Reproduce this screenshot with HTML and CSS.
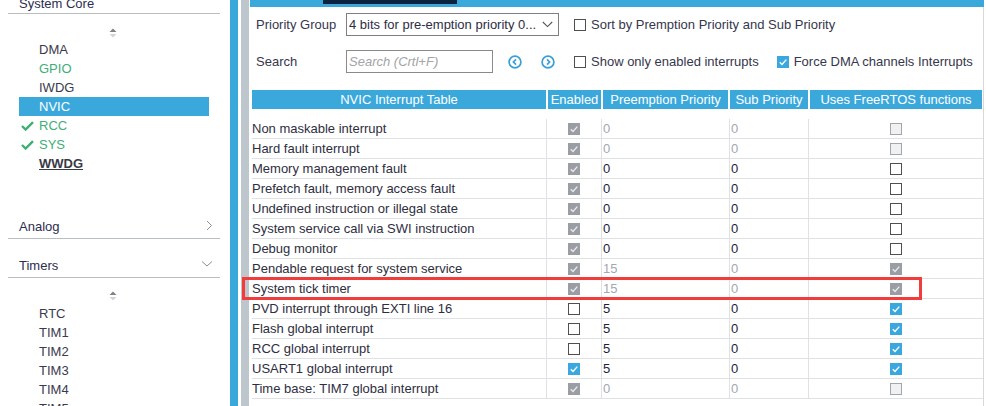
FILE: index.html
```html
<!DOCTYPE html>
<html>
<head>
<meta charset="utf-8">
<link rel="stylesheet" href="styles.css">
</head>
<body>
<div class="app">
  <aside class="sidebar">
    <div class="sec-head sec-first">
      <span>System Core</span>
      <svg class="chev" width="10" height="8" viewBox="0 0 10 8"><path d="M1.5 6 L5 2.5 L8.5 6" fill="none" stroke="#8a8f96" stroke-width="1"/></svg>
    </div>
    <div class="scroller"><svg width="8" height="10" viewBox="0 0 8 10"><path d="M0.5 4 L4 0.5 L7.5 4 Z" fill="#7d8288"/><path d="M0.5 6 L4 9.5 L7.5 6 Z" fill="#d2d5d8"/></svg></div>
    <ul class="items">
      <li>DMA</li>
      <li class="green">GPIO</li>
      <li>IWDG</li>
      <li class="sel">NVIC</li>
      <li class="green"><svg class="tick" width="13" height="10" viewBox="0 0 13 10"><path d="M1 5 L4.6 8.5 L12 1.2" fill="none" stroke="#3fae72" stroke-width="2.4"/></svg>RCC</li>
      <li class="green"><svg class="tick" width="13" height="10" viewBox="0 0 13 10"><path d="M1 5 L4.6 8.5 L12 1.2" fill="none" stroke="#3fae72" stroke-width="2.4"/></svg>SYS</li>
      <li class="bold">WWDG</li>
    </ul>
    <div class="sec-head sec-analog">
      <span>Analog</span>
      <svg class="chev" width="8" height="11" viewBox="0 0 8 11"><path d="M2 1 L6.5 5.5 L2 10" fill="none" stroke="#8a8f96" stroke-width="1"/></svg>
    </div>
    <div class="sec-head sec-timers">
      <span>Timers</span>
      <svg class="chev" width="12" height="8" viewBox="0 0 12 8"><path d="M1 1.5 L6 6 L11 1.5" fill="none" stroke="#8a8f96" stroke-width="1"/></svg>
    </div>
    <div class="scroller scroller2"><svg width="8" height="10" viewBox="0 0 8 10"><path d="M0.5 4 L4 0.5 L7.5 4 Z" fill="#7d8288"/><path d="M0.5 6 L4 9.5 L7.5 6 Z" fill="#d2d5d8"/></svg></div>
    <ul class="items">
      <li>RTC</li>
      <li>TIM1</li>
      <li>TIM2</li>
      <li>TIM3</li>
      <li>TIM4</li>
      <li>TIM5</li>
    </ul>
  </aside>
  <div class="bar-blue"></div>
  <div class="bar-gap"></div>
  <div class="bar-gray"></div>
  <main class="main">
    <div class="topstrip"><div class="tab"></div></div>
    <div class="content">
      <div class="tool-row row1">
        <span class="tlabel">Priority Group</span>
        <div class="select"><span>4 bits for pre-emption priority 0...</span>
          <svg class="sel-chev" width="11" height="7" viewBox="0 0 11 7"><path d="M0.8 1 L5.5 5.6 L10.2 1" fill="none" stroke="#555" stroke-width="1.1"/></svg>
        </div>
        <span class="cb cb-off opt-cb"></span><span class="opt">Sort by Premption Priority and Sub Priority</span>
      </div>
      <div class="tool-row row2">
        <span class="tlabel">Search</span>
        <input class="search" type="text" placeholder="Search (Crtl+F)">
        <svg class="nav nav1" width="14" height="14" viewBox="0 0 14 14"><circle cx="7" cy="7" r="5.9" fill="none" stroke="#3a9fd8" stroke-width="1.7"/><path d="M8 4.3 L5.4 7 L8 9.7" fill="none" stroke="#3a9fd8" stroke-width="1.7"/></svg>
        <svg class="nav nav2" width="14" height="14" viewBox="0 0 14 14"><circle cx="7" cy="7" r="5.9" fill="none" stroke="#3a9fd8" stroke-width="1.7"/><path d="M6 4.3 L8.6 7 L6 9.7" fill="none" stroke="#3a9fd8" stroke-width="1.7"/></svg>
        <span class="cb cb-off opt-cb2"></span><span class="opt">Show only enabled interrupts</span>
        <span class="cb cb-on opt-cb3"><svg viewBox="0 0 12 12"><path d="M2.8 6.3 L5 8.4 L9.3 3.6" fill="none" stroke="#fff" stroke-width="1.4"/></svg></span><span class="opt">Force DMA channels Interrupts</span>
      </div>
      <div class="thead">
        <div class="th c-name">NVIC Interrupt Table</div>
        <div class="th c-en">Enabled</div>
        <div class="th c-pre">Preemption Priority</div>
        <div class="th c-sub">Sub Priority</div>
        <div class="th c-rtos">Uses FreeRTOS functions</div>
      </div>
      <div class="tbody" id="tbody"></div>
    </div>
  </main>
  <div class="highlight"></div>
</div>
<script src="app.js"></script>
</body>
</html>
```

FILE: app.js
```js
const rows = [
  ["Non maskable interrupt", "dc", "0", "0", true, "du"],
  ["Hard fault interrupt", "dc", "0", "0", true, "du"],
  ["Memory management fault", "dc", "0", "0", false, "u"],
  ["Prefetch fault, memory access fault", "dc", "0", "0", false, "u"],
  ["Undefined instruction or illegal state", "dc", "0", "0", false, "u"],
  ["System service call via SWI instruction", "dc", "0", "0", false, "u"],
  ["Debug monitor", "dc", "0", "0", false, "u"],
  ["Pendable request for system service", "dc", "15", "0", true, "dc"],
  ["System tick timer", "dc", "15", "0", true, "dc"],
  ["PVD interrupt through EXTI line 16", "u", "5", "0", false, "c"],
  ["Flash global interrupt", "u", "5", "0", false, "c"],
  ["RCC global interrupt", "u", "5", "0", false, "c"],
  ["USART1 global interrupt", "c", "5", "0", false, "c"],
  ["Time base: TIM7 global interrupt", "dc", "0", "0", true, "du"]
];
const check = (col) => '<svg viewBox="0 0 12 12"><path d="M2.8 6.3 L5 8.4 L9.3 3.6" fill="none" stroke="' + col + '" stroke-width="1.4"/></svg>';
function box(kind) {
  if (kind === "dc") return '<span class="cb cb-dis-on">' + check("#e9eaeb") + '</span>';
  if (kind === "du") return '<span class="cb cb-dis-off"></span>';
  if (kind === "c") return '<span class="cb cb-on">' + check("#fff") + '</span>';
  return '<span class="cb cb-off"></span>';
}
const tb = document.getElementById("tbody");
tb.innerHTML = rows.map(r => {
  const dim = r[4] ? " dim" : "";
  return '<div class="tr">' +
    '<div class="td c-name">' + r[0] + '</div>' +
    '<div class="td c-en">' + box(r[1]) + '</div>' +
    '<div class="td c-pre' + dim + '">' + r[2] + '</div>' +
    '<div class="td c-sub' + dim + '">' + r[3] + '</div>' +
    '<div class="td c-rtos">' + box(r[5]) + '</div>' +
    '</div>';
}).join("");
```

FILE: styles.css
```css
* { box-sizing: border-box; }
html, body { margin: 0; padding: 0; }
body {
  width: 986px;
  height: 406px;
  overflow: hidden;
  background: #fff;
  font-family: "Liberation Sans", Arial, sans-serif;
  font-size: 13px;
  color: #33334a;
}
.app {
  position: relative;
  display: flex;
  width: 986px;
  height: 406px;
  overflow: hidden;
}

/* sidebar */
.sidebar {
  width: 230px;
  flex: none;
  overflow: hidden;
}
.sec-head {
  display: flex;
  align-items: center;
  justify-content: space-between;
  margin: 0 10px 0 8px;
  padding: 0 12px 0 11px;
  border-bottom: 1px solid #b9bec3;
  color: #2d2d50;
}
.sec-first {
  margin-top: -7px;
  height: 21px;
}
.sec-first .chev { margin-top: -12px; margin-right: -3px; }
.sec-analog { margin-top: 41px; height: 25px; }
.sec-timers { margin-top: 14px; height: 25px; }
.sec-analog .chev { margin-right: -5px; margin-top: -1px; }
.sec-timers .chev { margin-right: -5px; margin-top: -3px; }
.scroller {
  height: 26px;
  display: flex;
  justify-content: center;
  padding: 14px 0 0 0;
  margin-left: -4px;
}
.scroller2 { height: 26px; padding-top: 13px; }
.items {
  list-style: none;
  margin: 0 0 0 19px;
  padding: 0;
  width: 190px;
}
.items li {
  position: relative;
  height: 19px;
  line-height: 19px;
  padding-left: 20px;
  color: #3a3a4e;
}
.items li.green { color: #3fae78; }
.items li.sel { background: #3ba8dc; color: #fff; }
.items li.bold { font-weight: bold; text-decoration: underline; color: #3a3a46; }
.items .tick { position: absolute; left: 2px; top: 5px; }

.bar-blue { width: 8px; flex: none; background: #3ba8dc; }
.bar-gap { width: 3px; flex: none; background: #fff; }
.bar-gray { width: 8px; flex: none; background: #bcc6cc; }

/* main */
.main {
  flex: 1;
  display: flex;
  flex-direction: column;
}
.topstrip {
  height: 7px;
  margin: 0 2px 0 1px;
  background: #3ba8dc;
  padding-left: 73px;
}
.tab { width: 134px; height: 4px; background: #0c2340; }
.content {
  flex: 1;
  width: 735px;
  border-right: 1px solid #d6d9dc;
  padding-left: 3px;
}
.tool-row {
  display: flex;
  align-items: center;
  height: 23px;
  padding-left: 4px;
  color: #36364c;
}
.row1 { margin-top: 6px; }
.row2 { margin-top: 14px; }
.tlabel { width: 90px; flex: none; }
.select {
  width: 213px;
  height: 23px;
  border: 1px solid #7f7f7f;
  display: flex;
  align-items: center;
  justify-content: space-between;
  padding: 0 5px 0 2px;
  color: #2d2d45;
}
.search {
  width: 147px;
  height: 23px;
  border: 1px solid #8a8a8a;
  font-family: "Liberation Sans", Arial, sans-serif;
  font-size: 13px;
  font-style: italic;
  padding: 0 2px;
  margin: 0;
  outline: none;
}
.search::placeholder { color: #a3a3a8; }
.nav { flex: none; }
.nav1 { margin-left: 15px; }
.nav2 { margin-left: 19px; }
.opt { margin-left: 5px; }
.opt-cb { margin-left: 15px; }
.opt-cb2 { margin-left: 19px; }
.opt-cb3 { margin-left: 18px; }

.cb {
  display: inline-block;
  width: 12px;
  height: 12px;
  flex: none;
}
.cb svg { display: block; width: 12px; height: 12px; }
.cb-off { border: 1px solid #4f4f4f; background: #fff; }
.cb-on { background: #3aa8de; }
.cb-dis-on { background: #9a9ea4; }
.cb-dis-off { border: 1px solid #a3a5a8; background: #f0f1f3; }

/* table */
.thead {
  display: flex;
  gap: 2px;
  margin-top: 17px;
  height: 19px;
  width: 730px;
}
.th {
  background: #3ba8dc;
  color: #fff;
  text-align: center;
  line-height: 19px;
  font-size: 13px;
  white-space: nowrap;
}
.thead .c-name { width: 294px; }
.thead .c-en { width: 53px; }
.thead .c-pre { width: 125px; }
.thead .c-sub { width: 78px; }
.thead .c-rtos { width: 172px; }

.tbody { margin-top: 10px; width: 731px; }
.tr {
  display: flex;
  height: 20px;
  border-bottom: 1px solid #dfe1e4;
}
.td {
  height: 19px;
  line-height: 19px;
  border-right: 1px solid #dfe1e4;
  white-space: nowrap;
  color: #2e2e40;
}
.tbody .c-name { width: 295px; }
.tbody .c-en { width: 55px; display: flex; align-items: center; justify-content: center; }
.tbody .c-pre { width: 128px; padding-left: 1px; color: #1e1e3c; }
.tbody .c-sub { width: 79px; padding-left: 1px; color: #1e1e3c; }
.tbody .c-rtos { width: 174px; border-right: none; display: flex; align-items: center; justify-content: center; }
.tbody .dim { color: #a2a8b3; }

.highlight {
  position: absolute;
  left: 242px;
  top: 277px;
  width: 680px;
  height: 23px;
  border: 3px solid #f23c3c;
  pointer-events: none;
}
```
